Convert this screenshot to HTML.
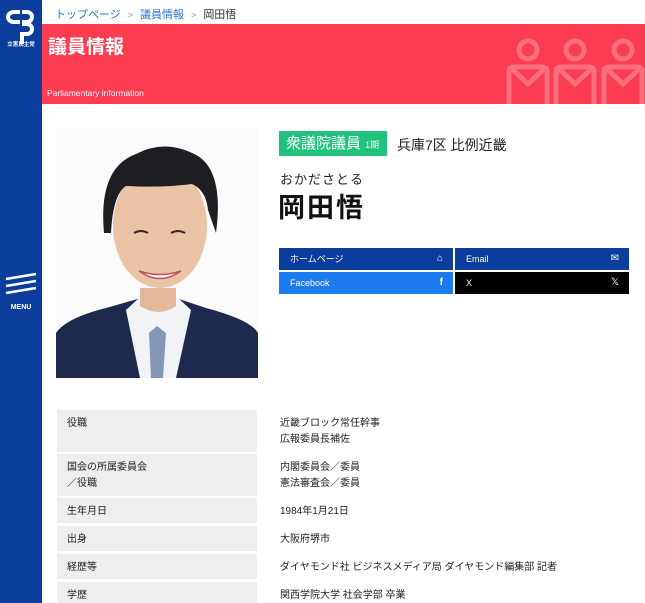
<!DOCTYPE html>
<html><head><meta charset="utf-8"><style>
*{margin:0;padding:0;box-sizing:border-box}
html,body{width:645px;height:603px;overflow:hidden}
body{background:#fff;font-family:"Liberation Sans","Noto Sans CJK JP",sans-serif;position:relative;color:#222}
.side{position:absolute;left:0;top:0;width:42px;height:603px;background:#0b3d9c}
.bc{position:absolute;left:55px;top:6px;font-size:11px;color:#333}
.bc a{color:#2a78c8;text-decoration:none}
.bc .s{color:#999;margin:0 7px;font-size:9px}
.banner{position:absolute;left:42px;top:24px;width:603px;height:80px;background:#fc3c50;overflow:hidden}
.banner h1{position:absolute;left:6px;top:8px;color:#fff;font-size:19px;font-weight:bold}
.banner .en{position:absolute;left:5px;top:64px;color:#fff;font-size:8.5px}
.abs{position:absolute}
.badge{left:279px;top:131px;width:108px;height:25px;background:#21c27b;color:#fff;font-size:15px;line-height:25px;padding-left:7px;white-space:nowrap}
.badge small{font-size:9px}
.dist{left:397px;top:135px;font-size:14px}
.kana{left:280px;top:169px;font-size:13px;letter-spacing:1px}
.name{left:278px;top:186px;font-size:27px;font-weight:bold;letter-spacing:2px;color:#111}
.links{left:279px;top:248px;width:350px;height:46px}
.links div{position:absolute;width:174px;height:22px;color:#fff;font-size:9px;line-height:22px;padding-left:11px}
.links span{position:absolute;right:10px;top:0;font-size:10px}
.l{position:absolute;left:57px;width:200px;background:#eee;font-size:10px;line-height:16px;padding:6px 10px}
.r{position:absolute;left:280px;font-size:10px;line-height:16px;padding-top:6px;white-space:nowrap}
</style></head><body>
<div class="side">
<svg width="42" height="60" viewBox="0 0 42 60"><g fill="none" stroke="#fff" stroke-width="4"><path d="M20 12 H14 a6 5 0 0 0 0 10 H20"/><path d="M22 12 H27 a5 5 0 0 1 0 10 H22"/><path d="M22 24 H27 a5 5 0 0 1 0 10 H22 V44"/></g><text x="21" y="46" font-size="5.5" fill="#fff" text-anchor="middle" font-weight="bold" font-family="Liberation Sans,Noto Sans CJK JP,sans-serif">立憲民主党</text></svg>
<svg class="abs" style="left:5px;top:272px" width="32" height="24"><g stroke="#fff" stroke-width="2.5"><path d="M1 7 L31 2"/><path d="M1 14 L31 9"/><path d="M1 21 L31 16"/></g></svg>
<div class="abs" style="left:0;top:304px;width:42px;text-align:center;color:#fff;font-size:7px;font-weight:bold">MENU</div>
</div>
<div class="bc"><a>トップページ</a><span class="s">&gt;</span><a>議員情報</a><span class="s">&gt;</span>岡田悟</div>
<div class="banner"><h1>議員情報</h1><div class="en">Parliamentary information</div>
<svg class="abs" style="left:460px;top:0" width="143" height="80"><g fill="none" stroke="#fd6f7c" stroke-width="5"><circle cx="26" cy="26" r="9"/><path d="M7 82 V47 a4 4 0 0 1 4 -4 H41 a4 4 0 0 1 4 4 V82 M10 45 L26 60 L42 45"/><circle cx="73" cy="26" r="9"/><path d="M54 82 V47 a4 4 0 0 1 4 -4 H88 a4 4 0 0 1 4 4 V82 M57 45 L73 60 L89 45"/><circle cx="121" cy="26" r="9"/><path d="M102 82 V47 a4 4 0 0 1 4 -4 H136 a4 4 0 0 1 4 4 V82 M105 45 L121 60 L137 45"/></g></svg>
</div>
<svg class="abs" style="left:56px;top:128px" width="202" height="250" viewBox="0 0 202 250">
<rect width="202" height="250" fill="#fbfbfb"/>
<path d="M0 250 V205 Q10 190 50 180 L85 170 H120 L150 180 Q195 192 202 205 V250Z" fill="#1e2a4d"/>
<path d="M70 182 L85 168 H120 L135 182 L120 250 H84Z" fill="#f2f3f5"/>
<path d="M93 205 L101 198 L110 205 L107 250 H95Z" fill="#8497b8"/>
<path d="M84 178 Q103 190 120 178 V160 H84Z" fill="#e2b79a"/>
<ellipse cx="104" cy="98" rx="47" ry="62" fill="#ebc3a6"/>
<path d="M48 105 Q42 40 80 26 Q110 10 142 28 Q168 45 160 105 L152 82 Q150 62 136 56 Q105 60 70 58 Q57 66 55 105Z" fill="#1d1d22"/>
<path d="M83 143 Q104 158 125 143 Q104 150 83 143Z" fill="#fff" stroke="#b55" stroke-width="1.5"/>
<path d="M78 105 Q85 101 92 105 M115 105 Q122 101 129 105" stroke="#3a2a24" stroke-width="2" fill="none"/>
</svg>
<div class="abs badge">衆議院議員 <small>1期</small></div>
<div class="abs dist">兵庫7区 比例近畿</div>
<div class="abs kana">おかださとる</div>
<div class="abs name">岡田悟</div>
<div class="abs links">
<div style="left:0;top:0;background:#0b3d9c">ホームページ<span>&#8962;</span></div>
<div style="left:176px;top:0;background:#0b3d9c">Email<span>&#9993;</span></div>
<div style="left:0;top:24px;background:#1b7af0">Facebook<span style="font-weight:bold">f</span></div>
<div style="left:176px;top:24px;background:#000">X<span>𝕏</span></div>
</div>
<div class="l" style="top:410px;height:42px">役職</div><div class="r" style="top:410px">近畿ブロック常任幹事<br>広報委員長補佐</div>
<div class="l" style="top:454px;height:42px">国会の所属委員会<br>／役職</div><div class="r" style="top:454px">内閣委員会／委員<br>憲法審査会／委員</div>
<div class="l" style="top:498px;height:25px">生年月日</div><div class="r" style="top:498px">1984年1月21日</div>
<div class="l" style="top:526px;height:25px">出身</div><div class="r" style="top:526px">大阪府堺市</div>
<div class="l" style="top:554px;height:25px">経歴等</div><div class="r" style="top:554px">ダイヤモンド社 ビジネスメディア局 ダイヤモンド編集部 記者</div>
<div class="l" style="top:582px;height:25px">学歴</div><div class="r" style="top:582px">関西学院大学 社会学部 卒業</div>
</body></html>
